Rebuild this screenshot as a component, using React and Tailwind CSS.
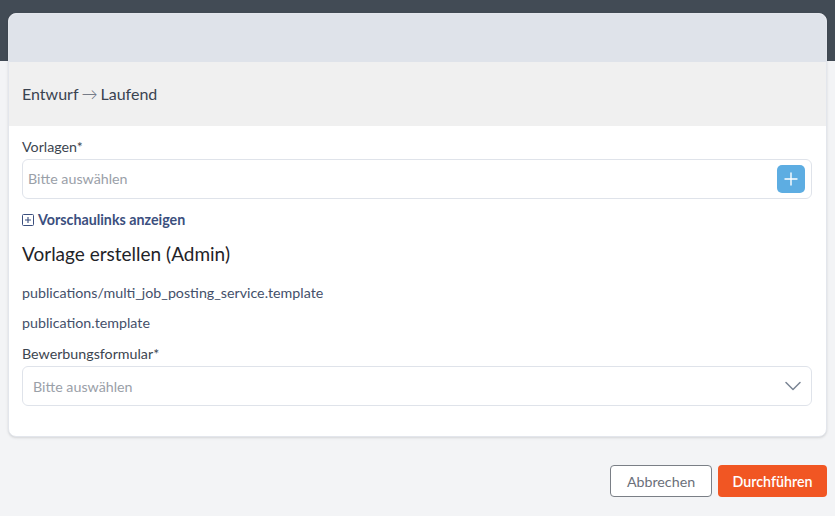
import React from "react";

const font = { fontFamily: "Lato, 'Open Sans', sans-serif" };

const PlusIcon = () => (
  <svg width="14" height="14" viewBox="0 0 14 14" fill="none">
    <path d="M7 1v12M1 7h12" stroke="white" strokeWidth="1.4" strokeLinecap="round" />
  </svg>
);

const Chevron = () => (
  <svg width="16" height="10" viewBox="0 0 16 10" fill="none">
    <path d="M1 1.5l7 7 7-7" stroke="#7a8594" strokeWidth="1.5" strokeLinecap="round" strokeLinejoin="round" />
  </svg>
);

const BoxPlus = () => (
  <svg width="12" height="12" viewBox="0 0 12 12" fill="none">
    <rect x="0.5" y="0.5" width="11" height="11" rx="1" stroke="#3b4f7e" />
    <path d="M6 3v6M3 6h6" stroke="#3b4f7e" strokeWidth="1.1" />
  </svg>
);

const App = () => {
  return (
    <div
      className="w-[835px] h-[516px] overflow-hidden bg-[linear-gradient(to_bottom,#424b55_0,#424b55_61px,#f3f4f6_61px)] pt-[13px] px-[8px]"
      style={font}
    >
      <div className="w-[819px] bg-white rounded-lg border border-[#e3e6ec] overflow-hidden shadow-sm">
        <div className="h-[48px] bg-[#dfe3ea]" />
        <div className="h-[64px] bg-[#f0f0f0] flex items-center px-[13px] text-[16px] text-[#3a4350]">
          Entwurf <span className="mx-[3px] text-[#5a6270] font-light">→</span> Laufend
        </div>
        <div className="pl-[13px] pr-[14px] pt-[12px] pb-[30px]">
          <div className="text-[14.25px] text-[#3c4550] leading-[18px]">Vorlagen*</div>
          <div className="mt-[3px] h-[40px] border border-[#dfe3ea] rounded-[6px] flex items-center justify-between pl-[5px] pr-[6px]">
            <span className="text-[14.25px] text-[#9aa0a8]">Bitte auswählen</span>
            <div className="w-[28px] h-[28px] rounded-[5px] bg-[#5dade2] flex items-center justify-center">
              <PlusIcon />
            </div>
          </div>
          <div className="mt-[10px] flex items-center gap-[4px] text-[14.25px] font-bold text-[#3b4f7e]">
            <BoxPlus />
            <span>Vorschaulinks anzeigen</span>
          </div>
          <div className="mt-[12px] text-[19px] text-[#1f2328] leading-[24px]">Vorlage erstellen (Admin)</div>
          <div className="mt-[18px] text-[14.25px] text-[#44506a] leading-[18px]">
            publications/multi_job_posting_service.template
          </div>
          <div className="mt-[12px] text-[14.25px] text-[#44506a] leading-[18px]">publication.template</div>
          <div className="mt-[13px] text-[14.25px] text-[#3c4550] leading-[18px]">Bewerbungsformular*</div>
          <div className="mt-[3px] h-[40px] border border-[#dfe3ea] rounded-[6px] flex items-center justify-between pl-[10px] pr-[10px]">
            <span className="text-[14.25px] text-[#9aa0a8]">Bitte auswählen</span>
            <Chevron />
          </div>
        </div>
      </div>
      <div className="mt-[28px] flex justify-end gap-[6px]">
        <button className="w-[102px] h-[32px] rounded-[4px] border border-[#7a7f86] bg-white text-[14.25px] text-[#6b7079]">
          Abbrechen
        </button>
        <button className="w-[109px] h-[32px] rounded-[4px] bg-[#f15623] text-[14.25px] font-semibold text-white">
          Durchführen
        </button>
      </div>
    </div>
  );
};

export default App;
